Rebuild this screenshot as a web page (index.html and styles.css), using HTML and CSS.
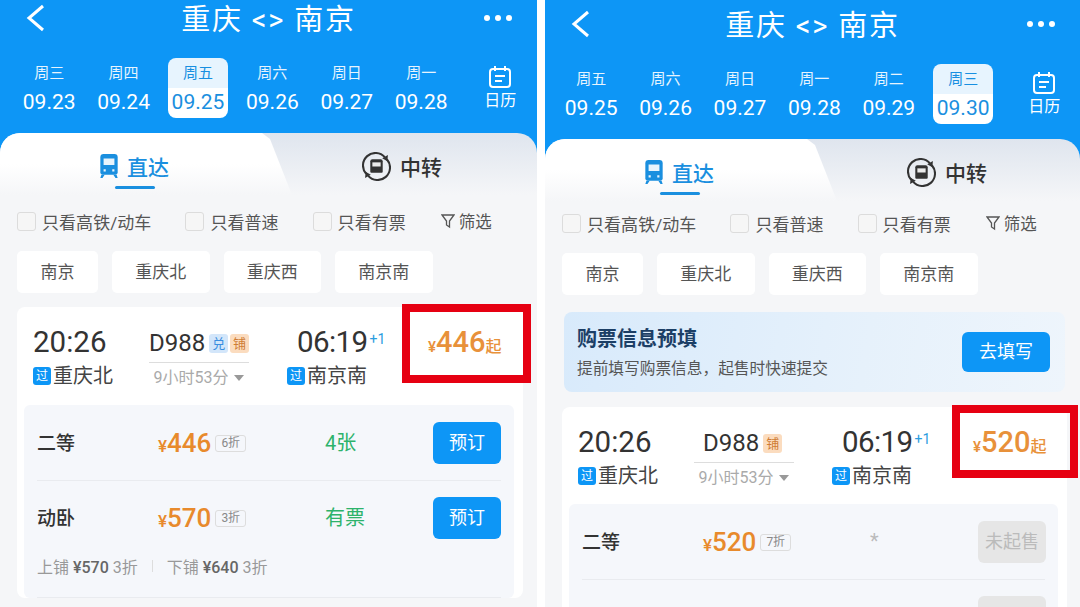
FILE: index.html
```html
<!DOCTYPE html>
<html lang="zh-CN">
<head>
  <meta charset="UTF-8" />
  <title>重庆 南京 车票查询</title>
  <link rel="stylesheet" href="styles.css">
</head>
<body>
<div class="screens">

  <!-- 左边: 09.25 -->
  <section class="phone">
    <div class="top">
      <div class="topbar">
        <svg class="back" viewBox="0 0 20 28"><path d="M17 2 3 14l14 12" /></svg>
        <div class="title">重庆 &lt;&gt; 南京</div>
        <div class="dots"><i></i><i></i><i></i></div>
      </div>
      <div class="dates">
        <div class="day"><span>周三</span><b>09.23</b></div>
        <div class="day"><span>周四</span><b>09.24</b></div>
        <div class="day active"><span>周五</span><b>09.25</b></div>
        <div class="day"><span>周六</span><b>09.26</b></div>
        <div class="day"><span>周日</span><b>09.27</b></div>
        <div class="day"><span>周一</span><b>09.28</b></div>
        <div class="cal">
          <svg viewBox="0 0 24 24"><rect x="2" y="4" width="20" height="18" rx="3" /><path d="M7 1v5M17 1v5M7 11h10M7 16h7" /></svg>
          <span>日历</span>
        </div>
      </div>
    </div>

    <div class="tabs">
      <div class="tab on">
        <svg class="ico-train" viewBox="0 0 20 24"><path d="M5 1h10a3 3 0 0 1 3 3v14a2 2 0 0 1-2 2H4a2 2 0 0 1-2-2V4a3 3 0 0 1 3-3z" /><path class="cut" d="M5 5h10v6H5zM5 15h2v2H5zM13 15h2v2h-2z" /><path d="M3 20h3l-2 3H2zM17 20h-3l2 3h2z" /></svg>
        <span>直达</span>
        <i class="line"></i>
      </div>
      <div class="tab off">
        <svg class="ico-swap" viewBox="0 0 28 28"><path class="ring" d="M4 21A12 12 0 0 1 22 5M24 7A12 12 0 0 1 6 23" /><path d="m25 3-.5 6-5-3zM3 25l.5-6 5 3z" /><path d="M10 7h8a2 2 0 0 1 2 2v10a1 1 0 0 1-1 1H9a1 1 0 0 1-1-1V9a2 2 0 0 1 2-2z" /><path class="cut" d="M10 10h8v4h-8z" /></svg>
        <span>中转</span>
      </div>
    </div>

    <div class="filters">
      <label class="check"><i></i>只看高铁/动车</label>
      <label class="check"><i></i>只看普速</label>
      <label class="check"><i></i>只看有票</label>
      <label class="check screen">
        <svg viewBox="0 0 14 16"><path d="M1 2h12L8.500 8v6l-3-2V8z" /></svg>筛选
      </label>
    </div>

    <div class="chips">
      <div class="chip small">南京</div>
      <div class="chip">重庆北</div>
      <div class="chip">重庆西</div>
      <div class="chip">南京南</div>
    </div>

    <div class="card">
      <div class="head">
        <div class="stop">
          <div class="time">20:26</div>
          <div class="station"><em>过</em>重庆北</div>
        </div>
        <div class="train">
          <div class="no">D988<u class="blue">兑</u><u class="orange">铺</u></div>
          <div class="dur">9小时53分<i class="tri"></i></div>
        </div>
        <div class="stop">
          <div class="time arrive">06:19<sup>+1</sup></div>
          <div class="station"><em>过</em>南京南</div>
        </div>
        <div class="from"><small>¥</small>446<small class="qi">起</small></div>
        <div class="mark"></div>
      </div>
      <div class="seats">
        <div class="seat">
          <div class="name">二等</div>
          <div class="price"><small>¥</small>446<span class="off-tag">6折</span></div>
          <div class="stock">4张</div>
          <div class="btn">预订</div>
        </div>
        <div class="seat nosep">
          <div class="name">动卧</div>
          <div class="price"><small>¥</small>570<span class="off-tag">3折</span></div>
          <div class="stock">有票</div>
          <div class="btn">预订</div>
        </div>
        <div class="berths">
          <span>上铺 <b>¥570</b> 3折</span><i></i><span>下铺 <b>¥640</b> 3折</span>
        </div>
      </div>
    </div>
  </section>

  <!-- 右边: 09.30 -->
  <section class="phone right">
    <div class="top">
      <div class="topbar">
        <svg class="back" viewBox="0 0 20 28"><path d="M17 2 3 14l14 12" /></svg>
        <div class="title">重庆 &lt;&gt; 南京</div>
        <div class="dots"><i></i><i></i><i></i></div>
      </div>
      <div class="dates">
        <div class="day"><span>周五</span><b>09.25</b></div>
        <div class="day"><span>周六</span><b>09.26</b></div>
        <div class="day"><span>周日</span><b>09.27</b></div>
        <div class="day"><span>周一</span><b>09.28</b></div>
        <div class="day"><span>周二</span><b>09.29</b></div>
        <div class="day active"><span>周三</span><b>09.30</b></div>
        <div class="cal">
          <svg viewBox="0 0 24 24"><rect x="2" y="4" width="20" height="18" rx="3" /><path d="M7 1v5M17 1v5M7 11h10M7 16h7" /></svg>
          <span>日历</span>
        </div>
      </div>
    </div>

    <div class="tabs">
      <div class="tab on">
        <svg class="ico-train" viewBox="0 0 20 24"><path d="M5 1h10a3 3 0 0 1 3 3v14a2 2 0 0 1-2 2H4a2 2 0 0 1-2-2V4a3 3 0 0 1 3-3z" /><path class="cut" d="M5 5h10v6H5zM5 15h2v2H5zM13 15h2v2h-2z" /><path d="M3 20h3l-2 3H2zM17 20h-3l2 3h2z" /></svg>
        <span>直达</span>
        <i class="line"></i>
      </div>
      <div class="tab off">
        <svg class="ico-swap" viewBox="0 0 28 28"><path class="ring" d="M4 21A12 12 0 0 1 22 5M24 7A12 12 0 0 1 6 23" /><path d="m25 3-.5 6-5-3zM3 25l.5-6 5 3z" /><path d="M10 7h8a2 2 0 0 1 2 2v10a1 1 0 0 1-1 1H9a1 1 0 0 1-1-1V9a2 2 0 0 1 2-2z" /><path class="cut" d="M10 10h8v4h-8z" /></svg>
        <span>中转</span>
      </div>
    </div>

    <div class="filters">
      <label class="check"><i></i>只看高铁/动车</label>
      <label class="check"><i></i>只看普速</label>
      <label class="check"><i></i>只看有票</label>
      <label class="check screen">
        <svg viewBox="0 0 14 16"><path d="M1 2h12L8.500 8v6l-3-2V8z" /></svg>筛选
      </label>
    </div>

    <div class="chips">
      <div class="chip small">南京</div>
      <div class="chip">重庆北</div>
      <div class="chip">重庆西</div>
      <div class="chip">南京南</div>
    </div>

    <div class="prefill">
      <div>
        <h3>购票信息预填</h3>
        <p>提前填写购票信息，起售时快速提交</p>
      </div>
      <div class="btn wide">去填写</div>
    </div>

    <div class="card">
      <div class="head">
        <div class="stop">
          <div class="time">20:26</div>
          <div class="station"><em>过</em>重庆北</div>
        </div>
        <div class="train">
          <div class="no">D988<u class="orange">铺</u></div>
          <div class="dur">9小时53分<i class="tri"></i></div>
        </div>
        <div class="stop">
          <div class="time arrive">06:19<sup>+1</sup></div>
          <div class="station"><em>过</em>南京南</div>
        </div>
        <div class="from"><small>¥</small>520<small class="qi">起</small></div>
        <div class="mark"></div>
      </div>
      <div class="seats">
        <div class="seat">
          <div class="name">二等</div>
          <div class="price"><small>¥</small>520<span class="off-tag">7折</span></div>
          <div class="stock star">*</div>
          <div class="btn off-sale">未起售</div>
        </div>
        <div class="seat nosep">
          <div class="name"></div>
          <div class="price"></div>
          <div class="stock"></div>
          <div class="btn off-sale"></div>
        </div>
      </div>
    </div>
  </section>

</div>
</body>
</html>
```

FILE: styles.css
```css
* {
  box-sizing: border-box;
}

body {
  margin: 0;
  background-color: #fff;
  font-family: Roboto, "Noto Sans CJK SC", sans-serif;
  color: #333;
}

.screens {
  display: flex;
  gap: 8px;
  height: 607px;
  overflow: hidden;
}

.phone {
  width: 537px;
  height: 607px;
  flex: none;
  overflow: hidden;
  background-color: #f5f6f8;
}

.phone.right {
  width: 535px;
}

/* blue header */
.top {
  background-color: #0d96f6;
  height: 153px;
  margin-bottom: -20px;
}

.right .top {
  height: 159px;
  padding-top: 6px;
}

.topbar {
  height: 40px;
  display: grid;
  grid-template-columns: 1fr auto 1fr;
  align-items: center;
  padding: 0 26px;
}

.back {
  width: 20px;
  height: 28px;
  margin-top: -4px;
}

.back path {
  fill: none;
  stroke: #fff;
  stroke-width: 3;
}

.title {
  margin-top: -6px;
  font-size: 29px;
  color: #fff;
  letter-spacing: 1.800px;
}

.dots {
  display: flex;
  gap: 5px;
  justify-self: end;
  margin-top: -4px;
  margin-right: -1px;
}

.dots i {
  width: 6px;
  height: 6px;
  border-radius: 50%;
  background-color: #fff;
}

.dates {
  display: flex;
  margin-top: 18px;
  padding-left: 12px;
}

.right .dates {
  padding-left: 9px;
}

.day {
  width: 74.400px;
  display: flex;
  flex-direction: column;
  align-items: center;
  color: #fff;
}

.day span {
  width: 60px;
  height: 30px;
  padding-top: 5px;
  font-size: 15px;
  line-height: 20px;
  text-align: center;
  opacity: 0.9;
  border-radius: 8px 8px 0 0;
}

.day b {
  width: 60px;
  height: 30px;
  font-size: 21px;
  font-weight: 400;
  line-height: 28px;
  text-align: center;
  border-radius: 0 0 8px 8px;
}

.day.active span,
.day.active b {
  background-color: #fff;
  color: #1a8fdf;
}

.cal {
  width: 50px;
  margin-left: 17px;
  padding-top: 7px;
  text-align: center;
  color: #fff;
  font-size: 16px;
  line-height: 23px;
}

.right .cal {
  margin-left: 19px;
}

.cal svg {
  display: block;
  width: 24px;
  height: 24px;
  margin: 0 auto;
  fill: none;
  stroke: #fff;
  stroke-width: 2;
}

/* tabs */
.tabs {
  position: relative;
  display: flex;
  height: 62px;
  border-radius: 20px 20px 0 0;
  background: linear-gradient(#dfe5ee, #f5f6f8);
}

.tab {
  position: relative;
  display: flex;
  align-items: center;
  font-size: 21px;
  font-weight: 500;
  padding-top: 4px;
}

.tab.on {
  width: 292px;
  padding-left: 98px;
  gap: 7px;
  color: #1a8fdf;
  border-radius: 20px 0 0 0;
  background: linear-gradient(#fff 50%, #f5f6f8);
  clip-path: polygon(0 0, 262px 0, 270px 6px, 292px 100%, 0 100%);
}

.tab.off {
  flex: 1;
  padding-left: 70px;
  gap: 9px;
  color: #333;
}

.ico-train {
  width: 22px;
  height: 26px;
  fill: #1a8fdf;
}

.ico-train .cut,
.ico-swap .cut {
  fill: #fff;
  opacity: 0.9;
}

.ico-swap {
  width: 29px;
  height: 29px;
  fill: #333;
}

.ico-swap .ring {
  fill: none;
  stroke: #333;
  stroke-width: 2;
}

.line {
  position: absolute;
  left: 115px;
  top: 53px;
  width: 40px;
  height: 3px;
  border-radius: 2px;
  background-color: #1a8fdf;
}

/* filters and station chips */
.filters {
  display: flex;
  align-items: center;
  gap: 34px;
  padding: 0 17px;
  margin-top: 16px;
  height: 20px;
}

.right .filters {
  margin-top: 12px;
}

.check {
  display: flex;
  align-items: center;
  gap: 6px;
  font-size: 17px;
  letter-spacing: 0.050px;
  color: #555;
}

.check i {
  width: 19px;
  height: 19px;
  border: 1px solid #dcdcdc;
  border-radius: 3px;
  background-color: #f6f6f6;
}

.check.screen {
  gap: 4px;
  margin-left: 1px;
  font-size: 16.500px;
  letter-spacing: 0;
}

.check svg {
  width: 14px;
  height: 16px;
  fill: none;
  stroke: #555;
  stroke-width: 1.300;
}

.chips {
  display: flex;
  gap: 14px;
  padding: 0 17px;
  margin-top: 20px;
}

.chip {
  width: 97.500px;
  height: 42px;
  border-radius: 5px;
  background-color: #fff;
  font-size: 17px;
  line-height: 42px;
  text-align: center;
  color: #555;
}

.chip.small {
  width: 81px;
}

/* only on the right page */
.prefill {
  display: flex;
  align-items: center;
  justify-content: space-between;
  height: 80px;
  margin: 17px 15px 0 19px;
  padding: 0 15px 0 13px;
  border-radius: 8px;
  background: linear-gradient(100deg, #d8eafb, #e6f1fb 60%, #eef5fc);
}

.prefill h3 {
  margin: 0 0 5px;
  font-size: 20px;
  font-weight: 700;
  line-height: 28px;
  color: #1c3f66;
}

.prefill p {
  margin: 0;
  font-size: 15.700px;
  line-height: 22px;
  color: #555;
}

/* train card */
.card {
  margin: 14px 14px 0 17px;
  border-radius: 8px;
  background-color: #fff;
}

.right .card {
  margin: 15px 13px 0 17px;
}

.head {
  position: relative;
  display: grid;
  grid-template-columns: 116px 138px 122px 1fr;
  height: 98px;
  padding: 17px 0 0 16px;
}

.right .head {
  height: 97px;
}

.time {
  font-size: 29.500px;
  line-height: 36px;
  color: #333;
}

.arrive {
  margin-left: 10px;
  letter-spacing: -0.600px;
}

.arrive sup {
  font-size: 14px;
  line-height: 0;
  margin-left: 2px;
  letter-spacing: 0;
  color: #2a9de0;
  position: relative;
  top: -8px;
  vertical-align: baseline;
}

.station {
  display: flex;
  align-items: center;
  gap: 2px;
  margin-top: 2px;
  font-size: 20px;
  line-height: 28px;
  color: #444;
}

.station em {
  width: 18px;
  height: 18px;
  border-radius: 3px;
  background-color: #0d96f6;
  color: #fff;
  font-size: 12px;
  font-style: normal;
  line-height: 18px;
  text-align: center;
}

.train {
  width: 100px;
  text-align: center;
}

.no {
  display: flex;
  align-items: center;
  white-space: nowrap;
  height: 39px;
  font-size: 24px;
  border-bottom: 1px solid #ddd;
  color: #333;
}

.no u {
  width: 19px;
  height: 19px;
  margin-left: 2px;
  border-radius: 3px;
  font-size: 13px;
  line-height: 19px;
  text-align: center;
  text-decoration: none;
}

.no u:first-of-type {
  margin-left: 4px;
}

.right .no {
  padding-left: 9px;
}

.no .blue {
  background-color: #d3e6fa;
  color: #3a8ee0;
}

.no .orange {
  background-color: #fbdcbf;
  color: #cf7c34;
}

.dur {
  display: flex;
  align-items: center;
  justify-content: center;
  gap: 6px;
  margin-top: 3px;
  font-size: 16px;
  line-height: 24px;
  color: #aaa;
  white-space: nowrap;
}

.tri {
  width: 0;
  height: 0;
  border-left: 5px solid transparent;
  border-right: 5px solid transparent;
  border-top: 6px solid #999;
}

.from {
  padding-left: 19px;
  font-size: 29px;
  font-weight: 500;
  line-height: 36px;
  color: #e8913a;
  white-space: nowrap;
}

.from small {
  font-size: 15px;
}

.from .qi {
  font-size: 16px;
}

/* red box drawn over the screenshot */
.mark {
  position: absolute;
  left: 385px;
  top: -3px;
  width: 129px;
  height: 79px;
  border: 8px solid #e60012;
}

.right .mark {
  left: 390px;
  top: -2px;
  width: 126px;
  height: 73px;
}

.seats {
  margin: 0 9px 0 7px;
  padding: 0 13px;
  border-radius: 6px;
  background-color: #f5f7fb;
}

.seat {
  display: grid;
  grid-template-columns: 121px 167px 108px 68px;
  align-items: center;
  padding: 17px 0 16px;
  border-bottom: 1px solid #e9ebef;
}

.seat.nosep {
  border-bottom: none;
  padding: 16px 0 10px;
}

.name {
  margin-top: -3px;
  font-size: 19px;
  font-weight: 500;
  color: #333;
}

.price {
  display: flex;
  align-items: baseline;
  font-size: 26px;
  font-weight: 500;
  color: #e88a2c;
}

.price small {
  font-size: 17px;
}

.off-tag {
  height: 17px;
  margin-left: 4px;
  padding: 0 5px;
  border: 1px solid #ddd;
  border-radius: 3px;
  font-size: 12px;
  font-weight: 400;
  line-height: 15px;
  color: #888;
  align-self: center;
}

.stock {
  margin-top: -3px;
  font-size: 20px;
  color: #2db36b;
}

.stock.star {
  color: #bbb;
}

.btn {
  width: 68px;
  height: 42px;
  border-radius: 6px;
  background-color: #0d96f6;
  color: #fff;
  font-size: 18px;
  line-height: 42px;
  text-align: center;
}

.btn.wide {
  width: 88px;
  height: 40px;
  line-height: 40px;
}

.btn.off-sale {
  background-color: #e6e6e6;
  color: #bbb;
}

.berths {
  display: flex;
  align-items: center;
  height: 49px;
  font-size: 16px;
  color: #999;
  border-bottom: 1px solid #e9ebef;
  padding-bottom: 15px;
}

.berths b {
  font-weight: 500;
  color: #666;
}

.berths i {
  width: 1px;
  height: 12px;
  margin: 0 14px;
  background-color: #ddd;
}
```
